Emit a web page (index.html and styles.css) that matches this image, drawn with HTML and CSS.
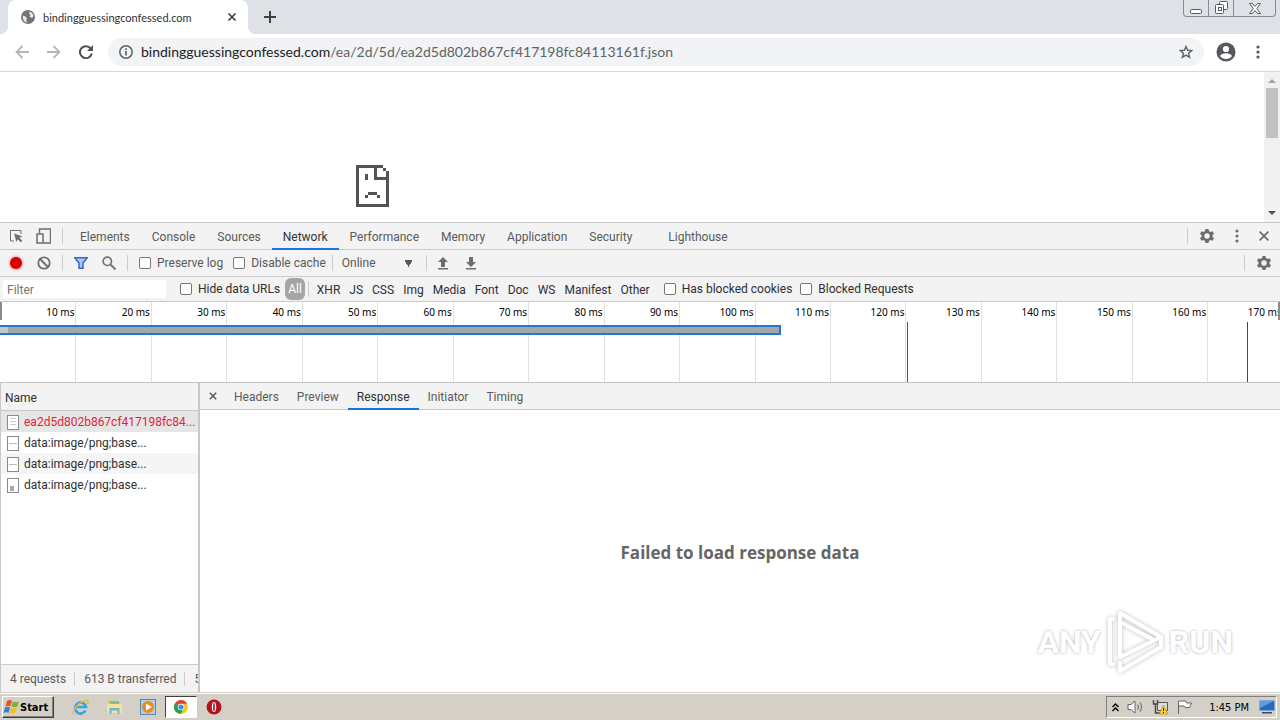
FILE: index.html
```html
<!DOCTYPE html>
<html lang="en">
<head>
  <meta charset="UTF-8">
  <title>bindingguessingconfessed.com</title>
  <link rel="stylesheet" href="styles.css">
</head>
<body>

<header class="tab-strip">
  <div class="tab">
    <svg class="globe" width="14" height="14" viewBox="0 0 14 14"><circle cx="7" cy="7" r="7" fill="#707478"/><path d="M2 5.500L4.500 6.500 6 8.500 5 10 6.500 12.500Q2 12 1.800 7zM6 2L9 1.800 8 3.500 9.500 5 8.500 6.500 11 8 12.500 6Q12 2.500 8.500 1.500z" fill="#e8eaed"/></svg>
    <span class="tab-title">bindingguessingconfessed.com</span>
    <button class="plain" aria-label="Close tab"><svg width="10" height="10" viewBox="0 0 10 10"><path d="M1.500 1.500l7 7M8.500 1.500l-7 7" stroke="#3c4043" stroke-width="1.700"/></svg></button>
  </div>
  <button class="plain new-tab" aria-label="New tab"><svg width="12" height="12" viewBox="0 0 12 12"><path d="M6 0v12M0 6h12" stroke="#3c4043" stroke-width="2"/></svg></button>
  <div class="window-buttons">
    <button aria-label="Minimize"><svg width="13" height="5" viewBox="0 0 13 5"><rect x=".5" y=".5" width="11" height="4" rx="1" fill="#fff" stroke="#565a66"/></svg></button>
    <button aria-label="Restore"><svg width="13" height="13" viewBox="0 0 13 13"><g fill="#fff" stroke="#565a66"><rect x="4.500" y=".5" width="8" height="8" rx="1"/><rect x=".5" y="3.500" width="8" height="9" rx="1"/><rect x="3.500" y="6.500" width="3" height="3"/></g></svg></button>
    <button class="wide" aria-label="Close"><svg width="12" height="11" viewBox="0 0 12 11"><path d="M.5.5h3L6 3.500 8.500.5h3L7.800 5.500l3.700 5h-3L6 7.500l-2.500 3h-3l3.700-5z" fill="#fff" stroke="#565a66"/></svg></button>
  </div>
</header>

<nav class="address-row">
  <button class="plain" aria-label="Back"><svg width="14" height="14" viewBox="0 0 14 14"><path d="M14 7H1.500M7.500 1L1.500 7l6 6" fill="none" stroke="#b4b7ba" stroke-width="1.800"/></svg></button>
  <button class="plain" aria-label="Forward"><svg width="14" height="14" viewBox="0 0 14 14"><path d="M0 7h12.500M6.500 1l6 6-6 6" fill="none" stroke="#b4b7ba" stroke-width="1.800"/></svg></button>
  <button class="plain" aria-label="Reload"><svg width="14" height="14" viewBox="0 0 14 14"><path d="M11.800 3.600A6 6 0 1 0 12.800 8.500" fill="none" stroke="#4d5156" stroke-width="2"/><path d="M14 0v6H8z" fill="#4d5156"/></svg></button>
  <label class="omnibox">
    <svg width="14" height="14" viewBox="0 0 14 14"><circle cx="7" cy="7" r="6.200" fill="none" stroke="#5f6368" stroke-width="1.500"/><path d="M7 6v4.500M7 3.200v1.700" stroke="#5f6368" stroke-width="1.700"/></svg>
    <span class="url" role="textbox" aria-label="Address"><b>bindingguessingconfessed.com</b>/ea/2d/5d/ea2d5d802b867cf417198fc84113161f.json</span>
    <svg width="14" height="14" viewBox="0 0 14 14"><path d="M7 1.500l1.600 3.800 4.100.3-3.100 2.700 1 4L7 10.100l-3.600 2.200 1-4L1.300 5.600l4.100-.3z" fill="none" stroke="#5f6368" stroke-width="1.400"/></svg>
  </label>
  <button class="plain avatar" aria-label="Profile"><svg width="20" height="20" viewBox="0 0 20 20"><circle cx="10" cy="10" r="9.500" fill="#55585d"/><circle cx="10" cy="7" r="3.100" fill="#fff"/><path d="M4 14q1.500-2.800 6-2.800T16 14q-2 3-6 3t-6-3z" fill="#fff"/></svg></button>
  <button class="plain" aria-label="Menu"><svg width="4" height="14" viewBox="0 0 4 14"><g fill="#55585d"><circle cx="2" cy="2" r="1.600"/><circle cx="2" cy="7" r="1.600"/><circle cx="2" cy="12" r="1.600"/></g></svg></button>
</nav>

<main class="page">
  <div class="error-page">
    <svg width="33" height="42" viewBox="0 0 33 42" shape-rendering="crispEdges"><path d="M0 0h27v3H21v9h12v30H0zM3 3v36h27V15H18V3zM27 3h3v3h-3zM30 6h3v6h-3zM9 9h3v6H9zM12 27h9v3h-9zM9 30h3v3H9zM21 30h3v3h-3z" fill="#535353" fill-rule="evenodd"/></svg>
  </div>
  <div class="scrollbar">
    <svg width="8" height="4" viewBox="0 0 8 4"><path d="M0 4l4-4 4 4z" fill="#a3a3a3"/></svg>
    <div class="thumb"></div>
    <svg width="8" height="4" viewBox="0 0 8 4"><path d="M0 0h8L4 4z" fill="#505050"/></svg>
  </div>
</main>

<section class="devtools">
  <div class="panel-tabs">
    <button class="plain inspect" aria-label="Inspect"><svg width="14" height="14" viewBox="0 0 14 14"><path d="M5 12H1.500V1.500H12V5" fill="none" stroke="#6e6e6e"/><path d="M5 4.500l8.500 3-3.200 1.300 3 3-1.500 1.500-3-3L7.500 13z" fill="#6e6e6e"/></svg></button>
    <button class="plain" aria-label="Device toolbar"><svg width="15" height="16" viewBox="0 0 15 16"><path d="M3.500 5V1h11v14H7.500" fill="none" stroke="#6e6e6e" stroke-width="1.400"/><rect x="1" y="6" width="6" height="9" fill="none" stroke="#6e6e6e" stroke-width="1.500"/></svg></button>
    <i class="divider"></i>
    <button class="panel">Elements</button>
    <button class="panel">Console</button>
    <button class="panel">Sources</button>
    <button class="panel selected">Network</button>
    <button class="panel">Performance</button>
    <button class="panel">Memory</button>
    <button class="panel">Application</button>
    <button class="panel">Security</button>
    <button class="panel lighthouse">Lighthouse</button>
    <div class="right-tools">
      <i class="divider"></i>
      <button class="plain" aria-label="Settings"><svg width="16" height="16" viewBox="0 0 16 16"><path d="M6.500 1h3l.5 2 1.500.9 2-.7 1.500 2.600L13.500 7.200v1.600L15 10.200l-1.500 2.600-2-.7L10 13l-.5 2h-3L6 13l-1.500-.9-2 .7L1 10.200l1.500-1.400V7.200L1 5.800l1.500-2.600 2 .7L6 3zM8 5.300a2.700 2.700 0 1 0 0 5.400 2.700 2.700 0 0 0 0-5.400z" fill="#6e6e6e" fill-rule="evenodd"/></svg></button>
      <button class="plain" aria-label="More"><svg width="4" height="14" viewBox="0 0 4 14"><g fill="#6e6e6e"><circle cx="2" cy="2" r="1.600"/><circle cx="2" cy="7" r="1.600"/><circle cx="2" cy="12" r="1.600"/></g></svg></button>
      <button class="plain" aria-label="Close DevTools"><svg width="10" height="10" viewBox="0 0 10 10"><path d="M.7.7l8.600 8.600M9.300.7L.7 9.300" stroke="#6e6e6e" stroke-width="1.800"/></svg></button>
    </div>
  </div>

  <div class="network-bar">
    <button class="plain record" aria-label="Record"><i></i></button>
    <button class="plain" aria-label="Clear"><svg width="14" height="14" viewBox="0 0 14 14"><path d="M2.500 2.500l9 9" stroke="#6e6e6e" stroke-width="2"/><circle cx="7" cy="7" r="5.700" fill="none" stroke="#6e6e6e" stroke-width="1.800"/></svg></button>
    <i class="divider"></i>
    <button class="plain" aria-label="Filter"><svg width="14" height="12" viewBox="0 0 14 12"><path d="M.8.800h12.400L9 6v5.200H5V6z" fill="#a9c6f5" stroke="#3367d6" stroke-width="1.500"/></svg></button>
    <button class="plain" aria-label="Search"><svg width="14" height="14" viewBox="0 0 14 14"><circle cx="5.300" cy="5.300" r="4.200" fill="none" stroke="#757575" stroke-width="1.700"/><path d="M8.500 8.500l5 5" stroke="#757575" stroke-width="2"/></svg></button>
    <i class="divider"></i>
    <label><input type="checkbox">Preserve log</label>
    <label class="disable"><input type="checkbox">Disable cache</label>
    <i class="divider before-select"></i>
    <select class="throttle" aria-label="Throttling"><option>Online</option></select>
    <i class="divider wide-gap"></i>
    <button class="plain" aria-label="Import"><svg width="10" height="13" viewBox="0 0 10 13"><path d="M5 0l5 5H7v5H3V5H0zM0 11h10v1.500H0z" fill="#6e6e6e"/></svg></button>
    <button class="plain export" aria-label="Export"><svg width="10" height="13" viewBox="0 0 10 13"><path d="M3 0h4v5h3l-5 5-5-5h3zM0 11h10v1.500H0z" fill="#6e6e6e"/></svg></button>
    <div class="right-tools">
      <i class="divider"></i>
      <button class="plain" aria-label="Network settings"><svg width="16" height="16" viewBox="0 0 16 16"><path d="M6.500 1h3l.5 2 1.500.9 2-.7 1.500 2.600L13.500 7.200v1.600L15 10.200l-1.500 2.600-2-.7L10 13l-.5 2h-3L6 13l-1.500-.9-2 .7L1 10.200l1.500-1.400V7.200L1 5.800l1.500-2.600 2 .7L6 3zM8 5.300a2.700 2.700 0 1 0 0 5.400 2.700 2.700 0 0 0 0-5.400z" fill="#6e6e6e" fill-rule="evenodd"/></svg></button>
    </div>
  </div>

  <div class="filter-bar">
    <input class="filter-text" type="text" placeholder="Filter" aria-label="Filter">
    <label><input type="checkbox">Hide data URLs</label>
    <div class="types">
      <button class="all">All</button>
      <i class="divider"></i>
      <button>XHR</button>
      <button>JS</button>
      <button>CSS</button>
      <button>Img</button>
      <button>Media</button>
      <button>Font</button>
      <button>Doc</button>
      <button>WS</button>
      <button>Manifest</button>
      <button>Other</button>
    </div>
    <label class="cookies"><input type="checkbox">Has blocked cookies</label>
    <label><input type="checkbox">Blocked Requests</label>
  </div>

  <div class="timeline">
    <span>10 ms</span><span>20 ms</span><span>30 ms</span><span>40 ms</span><span>50 ms</span><span>60 ms</span>
    <span>70 ms</span><span>80 ms</span><span>90 ms</span><span>100 ms</span><span>110 ms</span><span>120 ms</span>
    <span>130 ms</span><span>140 ms</span><span>150 ms</span><span>160 ms</span><span>170 ms</span>
    <div class="request-bar" style="width: 61%"></div>
    <div class="event dom-loaded" style="left: 70.860%"></div>
    <div class="event page-load" style="left: 97.430%"></div>
    <div class="grip"></div>
    <div class="grip end"></div>
  </div>

  <div class="split">
    <aside class="requests">
      <table>
        <thead>
          <tr><th>Name</th></tr>
        </thead>
        <tbody>
          <tr class="failed"><td><i class="file doc"></i>ea2d5d802b867cf417198fc84...</td></tr>
          <tr><td><i class="file dash"></i>data:image/png;base...</td></tr>
          <tr class="odd"><td><i class="file dash"></i>data:image/png;base...</td></tr>
          <tr><td><i class="file thumbnail"></i>data:image/png;base...</td></tr>
        </tbody>
      </table>
      <footer class="summary"><span>4 requests</span><span>613 B transferred</span><span class="cut">5</span></footer>
    </aside>
    <div class="details">
      <div class="detail-tabs">
        <button class="plain" aria-label="Close details"><svg width="8" height="8" viewBox="0 0 8 8"><path d="M.8.800l6.400 6.400M7.200.8L.8 7.200" stroke="#5a5a5a" stroke-width="1.500"/></svg></button>
        <button class="panel">Headers</button>
        <button class="panel">Preview</button>
        <button class="panel selected">Response</button>
        <button class="panel">Initiator</button>
        <button class="panel">Timing</button>
      </div>
      <div class="response"><h2>Failed to load response data</h2></div>
    </div>
  </div>
</section>

<div class="watermark">
  <span>ANY</span>
  <svg width="60" height="64" viewBox="0 0 60 64"><g fill="none" stroke="#fff" stroke-width="4" stroke-linejoin="round" stroke-linecap="round"><path d="M15 3v44L56 27zM15 12L47 29"/><path d="M8 9H5v45h3M15 53v8L56 37v-8"/></g></svg>
  <span>RUN</span>
</div>

<footer class="taskbar">
  <button class="start">
    <svg width="17" height="16" viewBox="0 0 17 16"><path d="M4 2q3-2 5 0L7.500 7.500q-2-1.500-5 0z" fill="#e8532b"/><path d="M10 2.500q3 1.500 6 0l-1.500 5q-3 1.500-6 0z" fill="#72b53b"/><path d="M2 8.500q3-1.500 5 0L5.500 14q-2-1.500-5 0z" fill="#3a7ecf"/><path d="M8 8.500q3 1.500 6 0l-1.500 5q-3 1.500-6 0z" fill="#f6bd2b"/></svg>
    Start
  </button>
  <button class="task" aria-label="Internet Explorer"><svg width="17" height="17" viewBox="0 0 17 17"><path d="M13.500 11.500A5.500 5.500 0 1 1 14 8H4" fill="none" stroke="#3ba4df" stroke-width="2.700"/><path d="M2 15.500C-1 12 9 .5 15 1.500q2 .5.500 3.500" fill="none" stroke="#e9bd32" stroke-width="1.400"/></svg></button>
  <button class="task" aria-label="Explorer"><svg width="17" height="16" viewBox="0 0 17 16"><path d="M2 3V1.500h5L8 3h6v10H2z" fill="#e9c860"/><path d="M4 2h9v5H4z" fill="#7cc38a"/><path d="M1 5h15v9H1z" fill="#f7e395"/><path d="M3.500 15V9h10v6h-2v-3.500h-6V15z" fill="#68b7df"/></svg></button>
  <button class="task" aria-label="Media Player"><svg width="16" height="16" viewBox="0 0 16 16"><rect x=".5" y=".5" width="15" height="15" fill="#a9cfed" stroke="#5289b8"/><circle cx="8" cy="8" r="6" fill="#ef8a1d"/><path d="M6 4.500v7L12 8z" fill="#fff"/></svg></button>
  <button class="task active" aria-label="Chrome"><svg width="14" height="14" viewBox="0 0 14 14"><circle cx="7" cy="7" r="7" fill="#f5c52c"/><path d="M7 7L1 3.400A7 7 0 0 1 13.100 3.700H7z" fill="#dd4437"/><path d="M7 7L1 3.400A7 7 0 0 0 6.500 14L9.900 8.500z" fill="#1c9e57"/><circle cx="7" cy="7" r="3.300" fill="#fff"/><circle cx="7" cy="7" r="2.600" fill="#4687ef"/></svg></button>
  <button class="task" aria-label="Opera"><svg width="16" height="16" viewBox="0 0 16 16"><circle cx="8" cy="8" r="7.500" fill="#b3141a"/><ellipse cx="8" cy="8" rx="2.200" ry="5" fill="#fff"/><ellipse cx="8" cy="8" rx=".8" ry="4.500" fill="#8c0d12"/></svg></button>
  <div class="tray">
    <svg width="7" height="9" viewBox="0 0 7 9"><path d="M.5 4l3-3 3 3M.5 8l3-3 3 3" fill="none" stroke="#000" stroke-width="1.400"/></svg>
    <svg class="speaker" width="17" height="14" viewBox="0 0 17 14"><path d="M1 4.500h3L8 1v12L4 9.500H1z" fill="#fff" stroke="#666"/><path d="M10.500 4.500q2 2.500 0 5M13 2.500q3 4.500 0 9" fill="none" stroke="#777" stroke-width="1.200"/></svg>
    <svg class="net" width="17" height="16" viewBox="0 0 17 16"><path d="M5.500 3.500h10v8h-10z" fill="#ddd" stroke="#555"/><path d="M1.500 1v4h4V1M3.500 5v9h5" fill="none" stroke="#444" stroke-width="1.400"/><path d="M11.500 6l4.500 9H7z" fill="#f8d31c" stroke="#9b7900" stroke-width=".5"/><path d="M11.500 9v3M11.500 13v1" stroke="#222"/></svg>
    <svg class="flag" width="16" height="14" viewBox="0 0 16 14"><path d="M1.500 14V1h7l1 2h5l-2 4.500H8l-1-1.500H2" fill="#fff" stroke="#666"/></svg>
    <time>1:45 PM</time>
    <svg width="16" height="14" viewBox="0 0 16 14"><rect x=".5" y=".5" width="15" height="10" rx="1" fill="#2768bd" stroke="#7fa7d4"/><path d="M1 1h14L1 8z" fill="#5a9de0"/><path d="M3 12h10v1.500H3z" fill="#364c66"/></svg>
  </div>
</footer>

</body>
</html>
```
FILE: styles.css
```css
* {
  box-sizing: border-box;
}
body {
  margin: 0;
  height: 100vh;
  display: flex;
  flex-direction: column;
  overflow: hidden;
  background: #fff;
  font-family: Roboto, sans-serif;
  font-size: 12px;
  color: #303030;
}
button, input, select {
  font: inherit;
  color: inherit;
}
button {
  padding: 0;
  border: 0;
  background: none;
}
svg {
  display: block;
  flex: none;
}
.plain {
  flex: none;
  display: flex;
  align-items: center;
  justify-content: center;
}

/* browser window */
.tab-strip {
  flex: none;
  display: flex;
  height: 34px;
  padding-left: 8px;
  background: #dee1e6;
}
.tab {
  position: relative;
  display: flex;
  align-items: center;
  width: 240px;
  padding: 0 11px 0 13px;
  background: #fff;
  border-radius: 8px 8px 0 0;
}
.tab::before,
.tab::after {
  content: "";
  position: absolute;
  bottom: 0;
  left: -8px;
  width: 8px;
  height: 8px;
  background: radial-gradient(circle at 0 0, transparent 8px, #fff 8px);
}
.tab::after {
  left: 100%;
  background: radial-gradient(circle at 100% 0, transparent 8px, #fff 8px);
}
.tab-title {
  flex: 1;
  margin-left: 8px;
  font-family: Lato, sans-serif;
  font-size: 11px;
  white-space: nowrap;
}
.new-tab {
  width: 44px;
}
.window-buttons {
  display: flex;
  height: 17px;
  margin-left: auto;
  margin-right: 4px;
  border: 1px solid #868b98;
  border-top: 0;
  border-radius: 0 0 4px 4px;
}
.window-buttons button {
  display: flex;
  align-items: flex-end;
  justify-content: center;
  width: 25px;
  padding-bottom: 2px;
  border-right: 1px solid #868b98;
}
.window-buttons .wide {
  width: 41px;
  border-right: 0;
}
.address-row {
  flex: none;
  display: flex;
  align-items: center;
  gap: 18px;
  height: 38px;
  padding: 0 20px 2px 15px;
  border-bottom: 1px solid #d6d8da;
}
.omnibox {
  flex: 1;
  display: flex;
  align-items: center;
  height: 28px;
  margin-left: -3px;
  padding: 0 11px;
  border-radius: 14px;
  background: #f1f3f4;
}
.url {
  flex: 1;
  margin-left: 8px;
  font-family: Lato, sans-serif;
  font-size: 14px;
  color: #5f6368;
}
.url b {
  font-weight: normal;
  color: #202124;
}
.avatar {
  margin: 0 2px 0 -6px;
}
.page {
  flex: none;
  display: flex;
  height: 150px;
}
.error-page {
  width: 552px;
  margin: 0 auto;
  padding-top: 93px;
}
.scrollbar {
  display: flex;
  flex-direction: column;
  align-items: center;
  width: 16px;
  padding: 7px 0;
  background: #f1f1f1;
}
.thumb {
  width: 12px;
  height: 50px;
  margin: 5px 0 auto;
  background: #c1c1c1;
}

/* devtools */
.devtools {
  flex: 1;
  min-height: 0;
  display: flex;
  flex-direction: column;
  border-top: 1px solid #c8c8c8;
}
.panel-tabs,
.network-bar,
.filter-bar {
  flex: none;
  display: flex;
  align-items: center;
  height: 27px;
  background: #f3f3f3;
  border-bottom: 1px solid #cacaca;
}
.divider {
  flex: none;
  width: 1px;
  height: 16px;
  background: #ccc;
}
.panel-tabs {
  padding: 0 11px 0 9px;
}
.panel-tabs > .divider {
  margin: 0 6px 0 11px;
}
.inspect {
  margin-right: 13px;
}
.panel {
  align-self: stretch;
  margin-bottom: -1px;
  padding: 2px 11px 0;
  border-bottom: 2px solid transparent;
  color: #5a5a5a;
}
.panel.selected {
  border-color: #1a73e8;
  color: #333;
}
.lighthouse {
  margin-left: 14px;
}
.right-tools {
  display: flex;
  align-items: center;
  gap: 20px;
  margin-left: auto;
}
.right-tools .divider {
  margin-right: -9px;
}
.network-bar {
  padding: 0 8px 0 9px;
  color: #5a5a5a;
}
.network-bar > .plain + .plain {
  margin-left: 14px;
}
.network-bar > .divider {
  margin: 0 11px;
}
.record i {
  width: 12px;
  height: 12px;
  margin: 1px;
  border-radius: 50%;
  background: #d80000;
  box-shadow: 0 0 2px 1px #ff9c9c;
}
label {
  display: flex;
  align-items: center;
  white-space: nowrap;
}
input[type="checkbox"] {
  appearance: none;
  width: 12px;
  height: 12px;
  margin: 0 6px 0 0;
  border: 1px solid #767676;
  border-radius: 2px;
  background: #fff;
}
.disable {
  margin-left: 10px;
}
.network-bar > .before-select {
  margin: 0 9px 0 6px;
}
.throttle {
  appearance: none;
  width: 70px;
  padding: 0;
  border: 0;
  background: conic-gradient(from -30deg at 50% 100%, #5a5a5a 60deg, transparent 0) no-repeat right center / 7px 7px;
  transform: none;
}
.network-bar > .wide-gap {
  margin-left: 14px;
}
.network-bar > .plain + .export {
  margin-left: 18px;
}
.filter-bar {
  height: 25px;
  color: #303030;
}
.filter-text {
  width: 163px;
  height: 18px;
  margin: 0 14px 0 3px;
  padding: 2px 4px 0;
  border: 0;
  background: #fff;
}
.filter-text::placeholder {
  color: #757575;
}
.types {
  display: flex;
  align-items: center;
  gap: 9px;
  margin: 0 14px 0 5px;
}
.types button {
  padding-top: 2px;
}
.types .divider {
  margin: 0 -1px 0 -6px;
}
.types .all {
  height: 22px;
  padding: 0 3px;
  border-radius: 6px;
  background: #a5a5a5;
  color: #fff;
}
.cookies {
  margin-right: 8px;
}
.timeline {
  position: relative;
  flex: none;
  display: grid;
  grid-template-columns: repeat(17, 5.9%);
  height: 81px;
  padding-left: 1px;
  overflow: hidden;
  border-bottom: 1px solid #c4c4c4;
}
.timeline span {
  padding: 3px 1px 0 0;
  border-right: 1px solid #e0e0e0;
  font-family: "Noto Sans", sans-serif;
  font-size: 10px;
  line-height: 14px;
  text-align: right;
  white-space: nowrap;
  color: #000;
}
.request-bar {
  position: absolute;
  top: 23px;
  left: 0;
  height: 10px;
  background: linear-gradient(90deg, #c8c8c8 8px, #a3a6aa 8px);
  border: 2px solid #1f78d1;
  border-left: 0;
}
.event {
  position: absolute;
  top: 20px;
  bottom: 0;
  width: 1px;
  background: #1b61b8;
}
.page-load {
  background: #b01c26;
}
.grip {
  position: absolute;
  left: 0;
  top: 0;
  width: 2px;
  height: 18px;
  background: #8c8c8c;
}
.grip.end {
  left: auto;
  right: 0;
}
.split {
  flex: 1;
  min-height: 0;
  display: flex;
}
.requests {
  flex: none;
  display: flex;
  flex-direction: column;
  width: 200px;
  border-left: 1px solid #c8c8c8;
  border-right: 2px solid #c8c8c8;
}
table {
  width: 100%;
  table-layout: fixed;
  border-collapse: collapse;
}
th {
  height: 27px;
  padding: 3px 4px 0;
  background: #f3f3f3;
  border-bottom: 1px solid #c8c8c8;
  font-weight: normal;
  text-align: left;
}
td {
  height: 21px;
  padding: 1px 0 0 6px;
  line-height: 20px;
  overflow: hidden;
  white-space: nowrap;
}
.failed {
  background: #e6e6e6;
  color: #dc2638;
}
.odd {
  background: #f5f5f5;
}
.file {
  display: inline-block;
  width: 12px;
  height: 15px;
  margin-right: 5px;
  border: 1px solid #8a8a8a;
  background: #fff no-repeat center;
  vertical-align: middle;
}
.doc {
  background-image: repeating-linear-gradient(#ccc 0 1px, #fff 1px 3px);
  background-size: 6px 9px;
}
.dash {
  background-image: linear-gradient(#bbb, #bbb);
  background-size: 8px 1px;
}
.thumbnail {
  background-image: linear-gradient(#aaa, #aaa);
  background-size: 4px 5px;
  background-position: 2px 7px;
}
.summary {
  display: flex;
  align-items: center;
  height: 29px;
  margin-top: auto;
  overflow: hidden;
  background: #f3f3f3;
  border-top: 1px solid #ccc;
  border-bottom: 1px solid #ccc;
  color: #5a5a5a;
  white-space: nowrap;
}
.summary span {
  padding: 0 8px 0 9px;
  border-right: 1px solid #ccc;
}
.summary .cut {
  border: 0;
}
.details {
  flex: 1;
  display: flex;
  flex-direction: column;
}
.detail-tabs {
  flex: none;
  display: flex;
  align-items: center;
  height: 27px;
  padding-left: 9px;
  background: #f3f3f3;
  border-bottom: 1px solid #c8c8c8;
}
.detail-tabs .plain {
  margin-right: 8px;
}
.detail-tabs .panel {
  padding: 2px 9px 0;
}
.response {
  flex: 1;
  display: flex;
  align-items: center;
  justify-content: center;
}
.response h2 {
  margin: 2px 0 0;
  font-family: "Open Sans", sans-serif;
  font-size: 17px;
  color: #666;
}
.watermark {
  position: absolute;
  right: 47px;
  bottom: 46px;
  display: flex;
  align-items: center;
  gap: 4px;
  color: #fff;
  font-size: 32px;
  font-weight: bold;
  text-shadow: 0 0 3px #aaa;
}
.watermark svg {
  filter: drop-shadow(0 0 2px #bbb);
}

/* windows taskbar */
.taskbar {
  flex: none;
  display: flex;
  align-items: center;
  height: 27px;
  padding: 0 3px 0 2px;
  background: #d4d0c8;
  border-top: 1px solid #fff;
  box-shadow: 0 -1px #d4d0c8;
  font-family: "DejaVu Sans Condensed", "DejaVu Sans", sans-serif;
  font-size: 11px;
  color: #000;
}
.start {
  display: flex;
  align-items: center;
  width: 52px;
  height: 22px;
  margin-right: 9px;
  border: 1px solid;
  border-color: #fff #404040 #404040 #fff;
  box-shadow: inset -1px -1px #808080;
  font-weight: bold;
}
.task {
  display: flex;
  align-items: center;
  justify-content: center;
  width: 34px;
  height: 22px;
}
.task.active {
  width: 32px;
  border: 1px solid;
  border-color: #404040 #fff #fff #404040;
  background: #fff;
}
.tray {
  display: flex;
  align-items: center;
  height: 22px;
  margin-left: auto;
  padding: 0 1px 0 5px;
  border: 1px solid;
  border-color: #808080 #fff #fff #808080;
}
.speaker, .net, .flag {
  margin-left: 8px;
}
.tray time {
  margin: 0 10px 0 16px;
  white-space: nowrap;
}
```
